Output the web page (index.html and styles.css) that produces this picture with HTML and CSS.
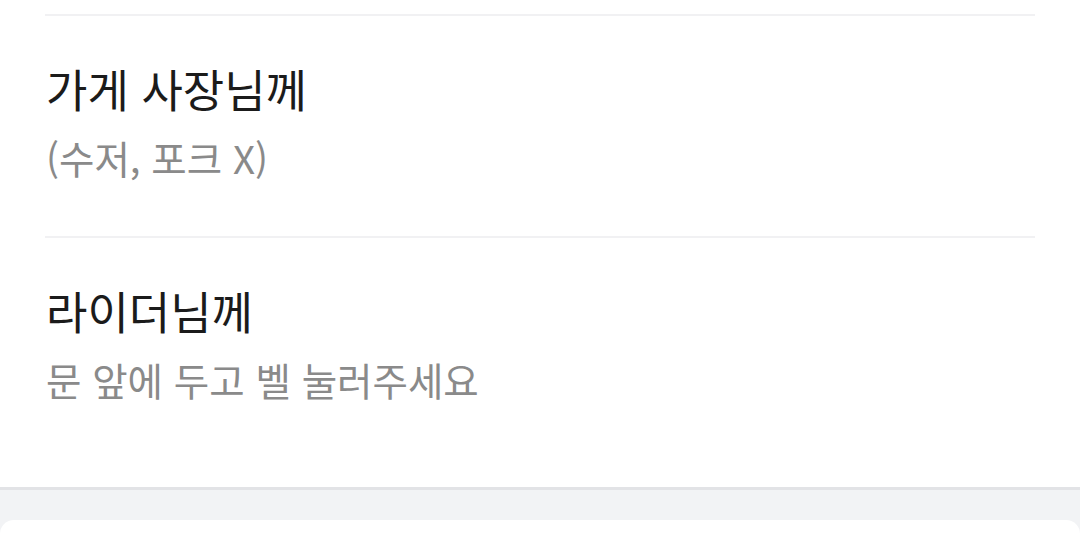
FILE: index.html
```html
<!DOCTYPE html>
<html lang="ko">
<head>
<meta charset="utf-8">
<link rel="stylesheet" href="styles.css">
</head>
<body>
<div class="page">
  <div class="list">
    <div class="item">
      <div class="title">가게 사장님께</div>
      <div class="sub">(수저, 포크 X)</div>
    </div>
    <div class="item">
      <div class="title">라이더님께</div>
      <div class="sub">문 앞에 두고 벨 눌러주세요</div>
    </div>
  </div>
  <div class="band">
    <div class="card"></div>
  </div>
</div>
</body>
</html>
```
FILE: styles.css
```css
html, body {
  margin: 0;
  padding: 0;
  background: #ffffff;
}
.page {
  width: 1080px;
  height: 536px;
  overflow: hidden;
  font-family: "Noto Sans CJK KR", "Noto Sans", sans-serif;
}
.list {
  padding: 14px 45px 0 45px;
  height: 473px;
}
.item {
  border-top: 2px solid #f1f1f3;
  padding-top: 45px;
  height: 175px;
}
.title {
  font-size: 45px;
  line-height: 56px;
  color: #1b1b1b;
  padding-left: 1px;
}
.sub {
  font-size: 38.5px;
  line-height: 52px;
  color: #8a8a8a;
  margin-top: 14px;
  padding-left: 1px;
}
.band {
  border-top: 3px solid #e2e3e6;
  background: #f2f3f5;
  padding-top: 30px;
  height: 60px;
}
.card {
  background: #ffffff;
  border-radius: 14px 14px 0 0;
  height: 40px;
}
```
